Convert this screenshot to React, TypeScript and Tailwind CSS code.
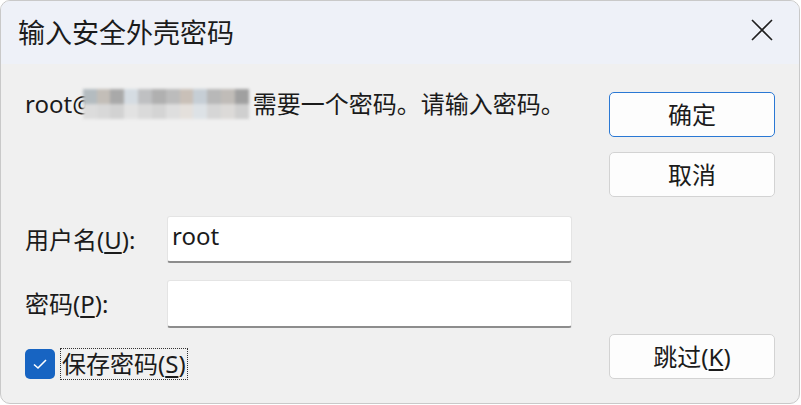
import React from 'react';

const font = { fontFamily: '"Noto Sans", "Noto Sans CJK SC", sans-serif' };

export default function App() {
  const topRow = ['#b4bcc0', '#c3beb8', '#a9a9a9', '#d5dce2', '#bfc0c2', '#b0b0b0', '#bcbcbc', '#c9c0b8', '#c6ced5', '#b8b8b8', '#c0bcb8', '#a0a0a0'];
  const bottomRow = ['#dcdcdc', '#d8d8d8', '#d2d2d2', '#e2e2e2', '#dadada', '#d4d4d4', '#dedede', '#e4e0dc', '#dde2e6', '#d6d6d6', '#dcdad8', '#cfcfcf'];

  return (
    <div className="w-[801px] h-[405px] bg-white" style={font}>
      <div className="w-[800px] h-[404px] rounded-[10px] border border-[#c9c9c9] overflow-hidden bg-[#f0f0f0] flex flex-col text-[#1b1b1b]">
        {/* title bar */}
        <div className="h-[63px] bg-[#eef1f8] flex items-center justify-between pl-[17px] pr-[26px]">
          <span className="text-[27px] leading-none">输入安全外壳密码</span>
          <svg width="22" height="22" viewBox="0 0 22 22" className="mb-[5px]">
            <path d="M1 1 L21 21 M21 1 L1 21" stroke="#1f1f1f" strokeWidth="1.6" />
          </svg>
        </div>

        {/* body */}
        <div className="flex pl-[24px] pr-[24px]">
          <div className="flex-1">
            <div className="mt-[25px] h-[30px] flex items-center text-[24px] leading-none">
              <span>root@</span>
              <span className="w-[166px] h-[30px] -ml-[11px] flex flex-col blur-[1.5px]">
                <span className="flex h-[15px]">
                  {topRow.map((c, i) => (
                    <span key={i} className="flex-1" style={{ backgroundColor: c }} />
                  ))}
                </span>
                <span className="flex h-[15px]">
                  {bottomRow.map((c, i) => (
                    <span key={i} className="flex-1" style={{ backgroundColor: c }} />
                  ))}
                </span>
              </span>
              <span className="ml-[4px]">需要一个密码。请输入密码。</span>
            </div>

            <div className="mt-[97px] flex items-center">
              <span className="w-[142px] text-[24px] leading-none">
                用户名(<span className="underline underline-offset-[3px]">U</span>):
              </span>
              <div className="w-[405px] h-[47px] bg-white border border-[#e4e4e4] border-b-2 border-b-[#8d8d8d] rounded-[3px] px-[4px] pt-[5px] text-[24px] leading-[28px]">
                root
              </div>
            </div>

            <div className="mt-[17px] flex items-center">
              <span className="w-[142px] text-[24px] leading-none">
                密码(<span className="underline underline-offset-[3px]">P</span>):
              </span>
              <div className="w-[405px] h-[48px] bg-white border border-[#e4e4e4] border-b-2 border-b-[#8d8d8d] rounded-[3px]" />
            </div>

            <div className="mt-[20px] flex items-center">
              <span className="w-[30px] h-[30px] rounded-[5px] bg-[#1764c2] flex items-center justify-center">
                <svg width="16" height="12" viewBox="0 0 16 12">
                  <path d="M2 6.5 L6 10 L14 2" stroke="white" strokeWidth="1.6" fill="none" />
                </svg>
              </span>
              <span className="ml-[5px] h-[32px] px-[1px] border border-dotted border-[#333] flex items-center text-[24px] leading-none">
                保存密码(<span className="underline underline-offset-[3px]">S</span>)
              </span>
            </div>
          </div>

          <div className="w-[166px] flex flex-col">
            <button className="mt-[28px] h-[45px] bg-[#fdfdfd] border border-[#2a78d4] rounded-[5px] text-[24px] leading-none">
              确定
            </button>
            <button className="mt-[15px] h-[45px] bg-[#fdfdfd] border border-[#d3d3d3] rounded-[5px] text-[24px] leading-none">
              取消
            </button>
            <button className="mt-[137px] h-[45px] bg-[#fdfdfd] border border-[#d3d3d3] rounded-[5px] text-[24px] leading-none">
              跳过(<span className="underline underline-offset-[3px]">K</span>)
            </button>
          </div>
        </div>
      </div>
    </div>
  );
}
